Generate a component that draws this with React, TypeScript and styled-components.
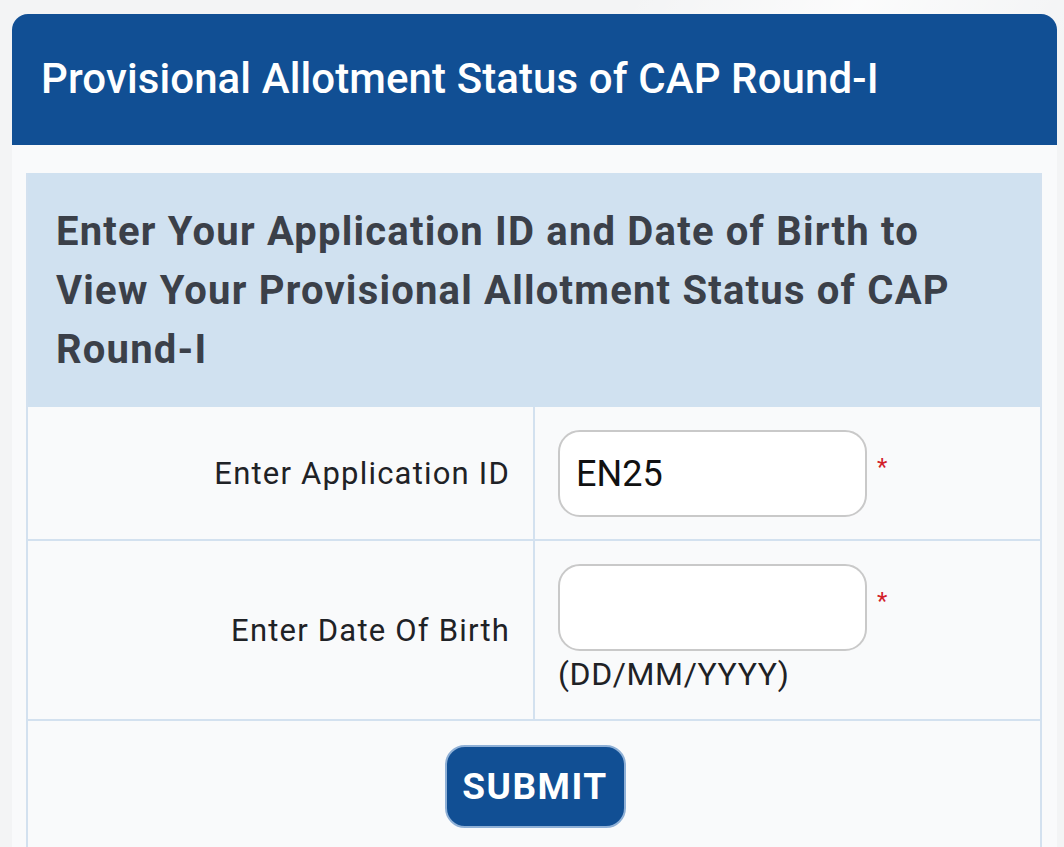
import React from 'react'
import styled, { createGlobalStyle } from 'styled-components'

const GlobalStyle = createGlobalStyle`
  html, body {
    margin: 0;
    padding: 0;
    background: #f3f4f5;
    font-family: Roboto, "Liberation Sans", Arial, sans-serif;
  }
  * { box-sizing: border-box; }
`

const Page = styled.div`
  padding: 14px 7px 0 12px;
  min-height: 847px;
  background:
    linear-gradient(120deg, rgba(255,255,255,0) 40%, rgba(255,255,255,0.7) 55%, rgba(255,255,255,0) 70%),
    #f3f4f5;
`

const Card = styled.div`
  width: 1045px;
  background: #f9fafb;
  border-radius: 16px 16px 0 0;
`

const Header = styled.div`
  height: 131px;
  background: #114f94;
  border-radius: 16px 16px 0 0;
  display: flex;
  align-items: center;
  padding: 0 29px 2px;
`

const Title = styled.h1`
  margin: 0;
  color: #fff;
  font-size: 42px;
  font-weight: 500;
  letter-spacing: 0.1px;
`

const Body = styled.div`
  padding: 28px 15px 0 14px;
`

const Table = styled.div`
  width: 1016px;
  border-left: 2px solid #d3e1ef;
  border-right: 2px solid #d3e1ef;
`

const Heading = styled.div`
  height: 234px;
  background: #d0e1f0;
  padding: 29px 30px 0 28px;
  color: #3b4049;
  font-size: 40px;
  font-weight: 700;
  letter-spacing: 1.2px;
  line-height: 59px;
`

const Row = styled.div<{ $h: number }>`
  display: grid;
  grid-template-columns: 507px 1fr;
  height: ${p => p.$h}px;
  border-bottom: 2px solid #d3e1ef;
`

const Label = styled.div<{ $pt: number }>`
  border-right: 2px solid #d3e1ef;
  text-align: right;
  padding: ${p => p.$pt}px 23px 0 0;
  font-size: 31px;
  color: #1f2226;
  letter-spacing: 1.2px;
`

const Field = styled.div`
  padding: 23px 0 0 23px;
  display: flex;
  flex-direction: column;
`

const InputLine = styled.div`
  display: flex;
  align-items: flex-start;
`

const Input = styled.input`
  width: 309px;
  height: 87px;
  border: 2px solid #c9c9c9;
  border-radius: 22px;
  background: #fff;
  padding: 0 16px;
  font-family: Roboto, "Liberation Sans", Arial, sans-serif;
  font-size: 36px;
  color: #111;
  outline: none;
`

const Star = styled.span`
  color: #d2202a;
  font-size: 24px;
  margin: 23px 0 0 10px;
`

const Hint = styled.div`
  font-size: 32px;
  color: #1f2226;
  margin-top: 4px;
  letter-spacing: 0.6px;
`

const SubmitRow = styled.div`
  display: flex;
  justify-content: center;
  padding: 24px 0 40px;
`

const SubmitButton = styled.button`
  width: 181px;
  height: 83px;
  margin-left: 2px;
  background: #114f94;
  border: 2px solid #8fb0d6;
  border-radius: 20px;
  color: #fff;
  font-family: Roboto, "Liberation Sans", Arial, sans-serif;
  font-size: 37px;
  font-weight: 700;
  letter-spacing: 1.5px;
  cursor: pointer;
`

export default function App() {
  return (
    <>
      <GlobalStyle />
      <Page>
        <Card>
          <Header>
            <Title>Provisional Allotment Status of CAP Round-I</Title>
          </Header>
          <Body>
            <Table>
              <Heading>
                Enter Your Application ID and Date of Birth to View Your Provisional Allotment Status of CAP Round-I
              </Heading>
              <Row $h={134}>
                <Label $pt={48}>Enter Application ID</Label>
                <Field>
                  <InputLine>
                    <Input defaultValue="EN25" />
                    <Star>*</Star>
                  </InputLine>
                </Field>
              </Row>
              <Row $h={180}>
                <Label $pt={71}>Enter Date Of Birth</Label>
                <Field>
                  <InputLine>
                    <Input />
                    <Star>*</Star>
                  </InputLine>
                  <Hint>(DD/MM/YYYY)</Hint>
                </Field>
              </Row>
              <SubmitRow>
                <SubmitButton>SUBMIT</SubmitButton>
              </SubmitRow>
            </Table>
          </Body>
        </Card>
      </Page>
    </>
  )
}
